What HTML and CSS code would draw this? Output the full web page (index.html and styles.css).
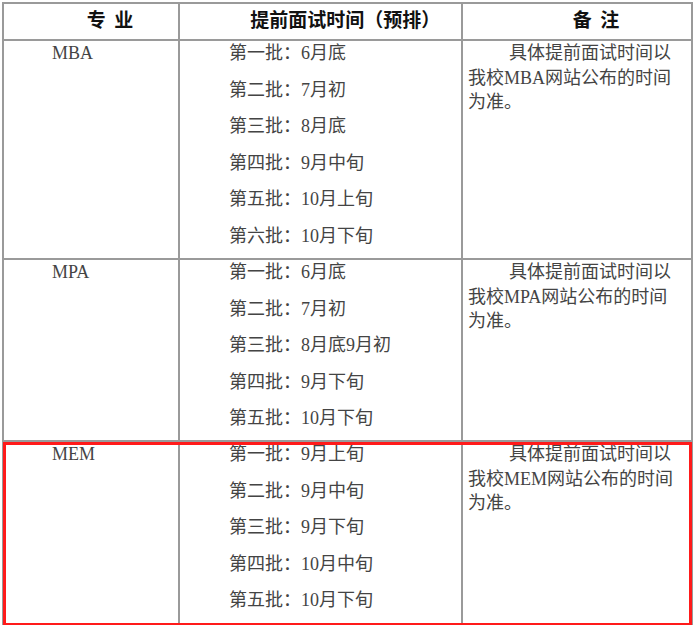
FILE: index.html
```html
<!DOCTYPE html>
<html lang="zh">
<head>
<meta charset="utf-8">
<link rel="stylesheet" href="styles.css">
</head>
<body>
<div class="table">
  <div class="row head">
    <div class="cell c1">专  业</div>
    <div class="cell c2">提前面试时间（预排）</div>
    <div class="cell c3">备  注</div>
  </div>
  <div class="row r-mba">
    <div class="cell c1 name">MBA</div>
    <div class="cell c2 list">
      <div class="item">第一批：6月底</div>
      <div class="item">第二批：7月初</div>
      <div class="item">第三批：8月底</div>
      <div class="item">第四批：9月中旬</div>
      <div class="item">第五批：10月上旬</div>
      <div class="item">第六批：10月下旬</div>
    </div>
    <div class="cell c3 note">具体提前面试时间以我校MBA网站公布的时间为准。</div>
  </div>
  <div class="row r-mpa">
    <div class="cell c1 name">MPA</div>
    <div class="cell c2 list">
      <div class="item">第一批：6月底</div>
      <div class="item">第二批：7月初</div>
      <div class="item">第三批：8月底9月初</div>
      <div class="item">第四批：9月下旬</div>
      <div class="item">第五批：10月下旬</div>
    </div>
    <div class="cell c3 note">具体提前面试时间以我校MPA网站公布的时间为准。</div>
  </div>
  <div class="row r-mem marked">
    <div class="cell c1 name">MEM</div>
    <div class="cell c2 list">
      <div class="item">第一批：9月上旬</div>
      <div class="item">第二批：9月中旬</div>
      <div class="item">第三批：9月下旬</div>
      <div class="item">第四批：10月中旬</div>
      <div class="item">第五批：10月下旬</div>
    </div>
    <div class="cell c3 note">具体提前面试时间以我校MEM网站公布的时间为准。</div>
    <div class="highlight"></div>
  </div>
</div>
</body>
</html>
```

FILE: styles.css
```css
html, body {
  margin: 0;
  padding: 0;
  background: #ffffff;
}

body {
  font-family: "Liberation Serif", "Noto Sans CJK SC", serif;
  color: #444444;
}

.table {
  width: 691px;
  margin: 2px 0 0 2px;
  border-top: 2px solid #9a9a9a;
  border-left: 2px solid #9a9a9a;
  box-sizing: border-box;
}

.row {
  display: grid;
  grid-template-columns: 176px 283px 1fr;
  position: relative;
}

.cell {
  border-right: 2px solid #9a9a9a;
  border-bottom: 2px solid #9a9a9a;
  box-sizing: border-box;
  font-size: 18px;
}

.head .cell {
  height: 37px;
  font-family: "Noto Sans CJK SC", sans-serif;
  font-weight: bold;
  font-size: 19px;
  color: #111111;
  text-align: center;
  text-indent: 2em;
  line-height: 30px;
  white-space: pre;
}

.head .c2 {
  text-indent: 2.6em;
}

.r-mba .cell { height: 219px; }
.r-mpa .cell { height: 182px; }
.r-mem .cell { height: 183px; }

.name {
  padding-left: 48px;
  line-height: 24px;
}

.list {
  padding-left: 49px;
  display: flex;
  flex-direction: column;
  gap: 12.5px;
}

.item {
  line-height: 24px;
  white-space: nowrap;
}

.note {
  padding: 0 17px 0 5px;
  line-height: 24.5px;
  text-indent: 41px;
}

.highlight {
  position: absolute;
  top: 0;
  left: -1px;
  right: 1px;
  bottom: -1px;
  border: 3px solid #ff1a1a;
  pointer-events: none;
}
```
